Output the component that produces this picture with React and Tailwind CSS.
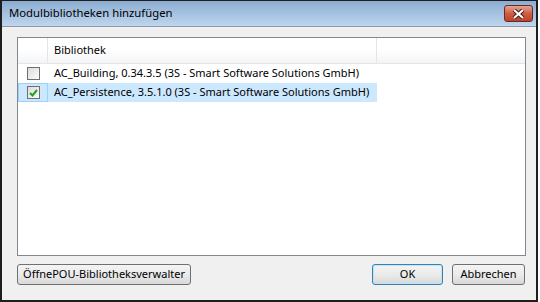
import React from 'react';

const font = { fontFamily: '"Noto Sans", "Open Sans", sans-serif' };

function CheckBox({ checked }) {
  return (
    <div className="w-[13px] h-[13px] border border-[#6f6f6f] bg-gradient-to-br from-[#dcdcdc] to-[#fbfbfb] flex items-center justify-center">
      {checked && (
        <svg width="9" height="8" viewBox="0 0 9 8">
          <path d="M1 4 L3.5 6.5 L8 1" stroke="#23a123" strokeWidth="2" fill="none" />
        </svg>
      )}
    </div>
  );
}

function Row({ checked, selected, label }) {
  return (
    <div className="flex h-[19px] items-center">
      <div
        className={
          'w-[30px] h-full flex items-center justify-center ' +
          (selected ? 'bg-[#cce8ff] border border-[#99d1ff]' : '')
        }
      >
        <CheckBox checked={checked} />
      </div>
      <div className={'w-[329px] h-full flex items-center pl-[6px] ' + (selected ? 'bg-[#cce8ff]' : '')}>
        <span className="text-[11px] text-black whitespace-nowrap">{label}</span>
      </div>
    </div>
  );
}

function Button({ children, width, isDefault }) {
  return (
    <div
      className={
        'h-[21px] shrink-0 whitespace-nowrap rounded-[3px] flex items-center justify-center text-[11px] text-black bg-gradient-to-b from-[#f4f4f4] via-[#ebebeb] to-[#d8d8d8] ' +
        (isDefault ? 'border border-[#3c7fb1] shadow-[inset_0_0_0_1px_#bde4f7]' : 'border border-[#707070]')
      }
      style={{ width }}
    >
      {children}
    </div>
  );
}

export default function App() {
  return (
    <div className="w-[540px] h-[302px] bg-white" style={font}>
      <div className="w-[538px] h-[302px] border-t border-x-2 border-b-2 border-[#1e1e1e] flex flex-col bg-[#f0f0f0]">
        {/* Titelleiste */}
        <div className="h-[26px] shrink-0 bg-gradient-to-b from-[#8cadd1] to-[#bed6ee] border-b border-[#8e99a4] flex items-center justify-between pl-[7px] pr-[3px]">
          <span className="text-[11.3px] text-black">Modulbibliotheken hinzufügen</span>
          <div className="self-start mt-[4px] w-[29px] h-[17px] rounded-[3px] border border-[#6b2a20] bg-gradient-to-b from-[#e4a593] via-[#cf5c45] to-[#c0402a] flex items-center justify-center">
            <svg width="13" height="10" viewBox="0 0 13 10">
              <path d="M2 1 L11 9 M11 1 L2 9" stroke="#3a1a14" strokeWidth="4" />
              <path d="M2 1 L11 9 M11 1 L2 9" stroke="#ffffff" strokeWidth="2.2" />
            </svg>
          </div>
        </div>

        {/* Inhalt */}
        <div className="flex-1 flex flex-col pt-[10px] pl-[15px] pr-[11px]">
          <div className="w-[509px] h-[219px] shrink-0 border border-[#828790] bg-white">
            <div className="flex h-[26px] border-b border-[#e5e5e5] bg-gradient-to-b from-white via-white to-[#f3f4f6]">
              <div className="w-[30px] border-r border-[#e3e5e8]" />
              <div className="w-[329px] border-r border-[#e3e5e8] flex items-center pl-[6px] text-[11px] text-black">
                Bibliothek
              </div>
              <div className="flex-1" />
            </div>
            <Row label="AC_Building, 0.34.3.5 (3S - Smart Software Solutions GmbH)" />
            <Row checked selected label="AC_Persistence, 3.5.1.0 (3S - Smart Software Solutions GmbH)" />
          </div>

          <div className="flex items-center mt-[8px]">
            <Button width={174}>ÖffnePOU-Bibliotheksverwalter</Button>
            <div className="flex-1" />
            <Button width={71} isDefault>OK</Button>
            <div className="w-[9px]" />
            <Button width={73}>Abbrechen</Button>
          </div>
        </div>
      </div>
    </div>
  );
}
